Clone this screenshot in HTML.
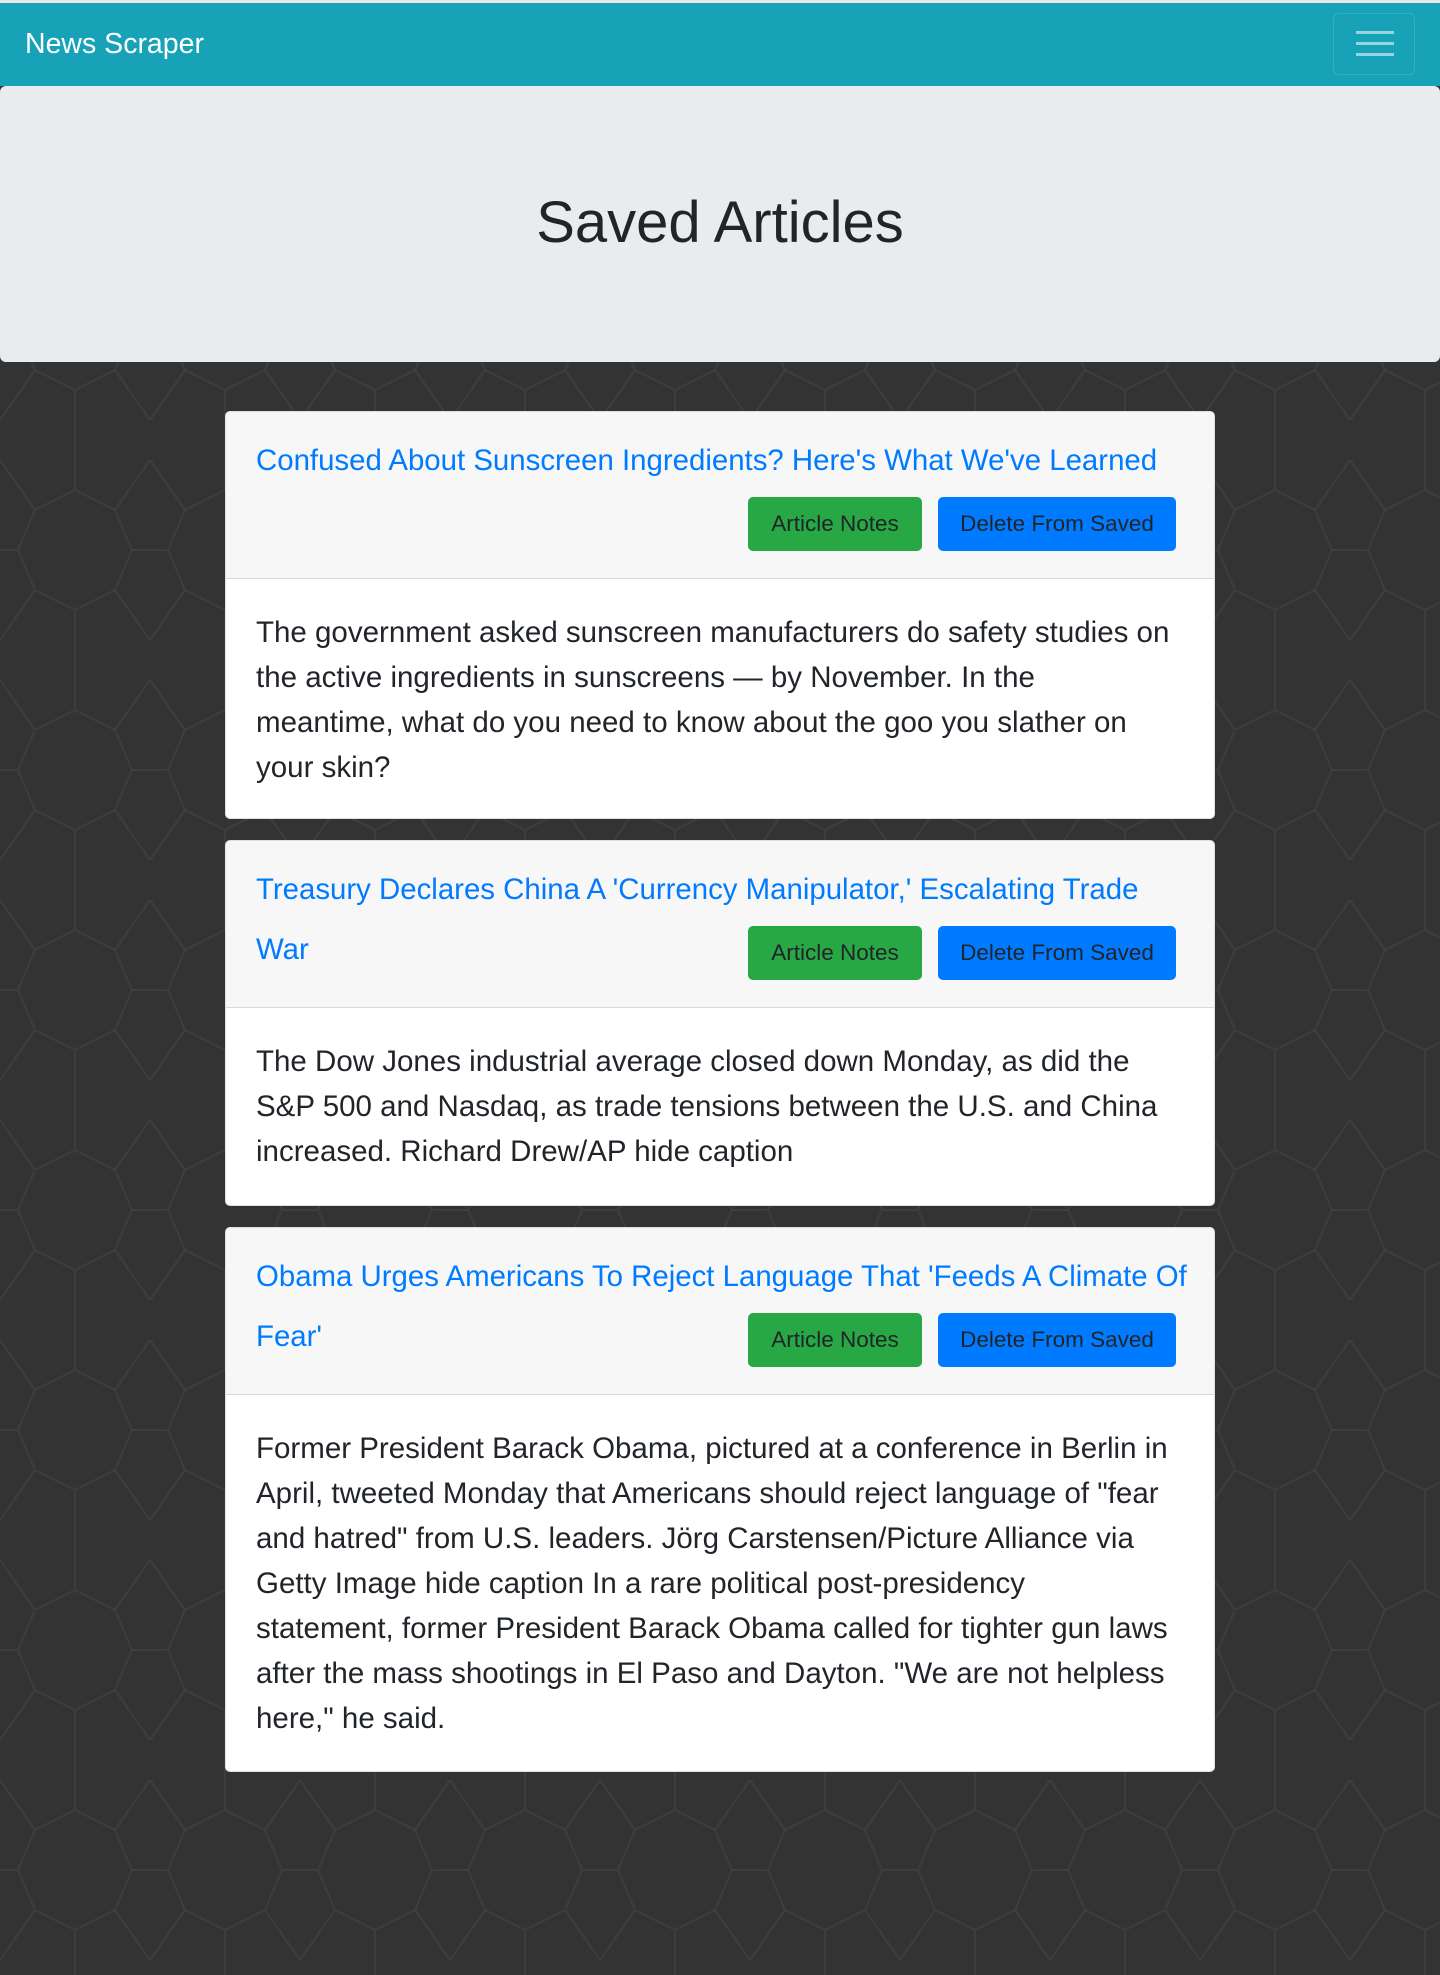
<!DOCTYPE html>
<html><head><meta charset="utf-8"><style>
*{box-sizing:border-box;margin:0;padding:0}
html,body{width:1440px;height:1975px;overflow:hidden}
body{background:#333;font-family:"Liberation Sans",sans-serif;position:relative}
#bg{position:absolute;left:0;top:0}
.nav{position:absolute;left:0;top:0;width:1440px;height:86px;background:#17a2b8;border-top:3px solid #e6e6e6}
.brand{position:absolute;left:25px;top:25px;color:#fff;font-size:28.5px}
.tog{position:absolute;left:1333px;top:10px;width:82px;height:62px;border:1px solid rgba(255,255,255,.12);border-radius:6px}
.tog i{position:absolute;left:22px;width:38px;height:3px;background:rgba(255,255,255,.55)}
.jumbo{position:absolute;left:0;top:86px;width:1440px;height:276px;background:#e9ecef;border-radius:6px}
.jumbo h1{position:absolute;left:0;width:1440px;top:102px;text-align:center;font-weight:300;font-size:58px;color:#212529;line-height:70px}
.card{position:absolute;left:225px;width:990px;background:#fff;border:1px solid rgba(0,0,0,.125);border-radius:5px;overflow:hidden}
.hd{background:#f7f7f7;border-bottom:1px solid rgba(0,0,0,.125);padding:19px 38px 27px 30px}
.ln{height:60px;line-height:60px;position:relative;white-space:nowrap}
.ln a{color:#007bff;font-size:29.4px;text-decoration:none}
.btns{position:absolute;right:0;top:6px;height:54px;display:flex;gap:16px}
.b{height:54px;line-height:54px;border-radius:5px;font-size:22.5px;color:#212529;text-align:center}
.g{background:#28a745;width:174px}
.bl{background:#007bff;width:238px}
.bd{padding:31px 30px 27px 30px;font-size:29.5px;line-height:45px;color:#212529;white-space:nowrap}
</style></head><body>
<svg id="bg" width="1440" height="1975">
<defs><pattern id="p" width="150" height="220" patternUnits="userSpaceOnUse">
<g fill="none" stroke="#3d3d3d" stroke-width="2">
<path d="M75 0 V50 L35 70 L18 110 L35 150 L75 170 V220"/>
<path d="M75 50 L115 70 L132 110 L115 150 L75 170"/>
<path d="M0 20 L35 70 M150 20 L115 70 M0 200 L35 150 M150 200 L115 150"/>
<path d="M18 110 H0 M132 110 H150"/>
</g></pattern></defs>
<rect width="1440" height="1975" fill="url(#p)"/>
</svg>
<div class="nav"><div class="brand">News Scraper</div><div class="tog"><i style="top:17px"></i><i style="top:28px"></i><i style="top:39px"></i></div></div>
<div class="jumbo"><h1>Saved Articles</h1></div>

<div class="card" style="top:411px;height:408px">
<div class="hd"><div class="ln"><a>Confused About Sunscreen Ingredients? Here's What We've Learned</a></div>
<div class="ln"><div class="btns"><div class="b g">Article Notes</div><div class="b bl">Delete From Saved</div></div></div></div>
<div class="bd">The government asked sunscreen manufacturers do safety studies on<br>the active ingredients in sunscreens — by November. In the<br>meantime, what do you need to know about the goo you slather on<br>your skin?</div>
</div>

<div class="card" style="top:840px;height:366px">
<div class="hd"><div class="ln"><a>Treasury Declares China A 'Currency Manipulator,' Escalating Trade</a></div>
<div class="ln"><a>War</a><div class="btns"><div class="b g">Article Notes</div><div class="b bl">Delete From Saved</div></div></div></div>
<div class="bd">The Dow Jones industrial average closed down Monday, as did the<br>S&amp;P 500 and Nasdaq, as trade tensions between the U.S. and China<br>increased. Richard Drew/AP hide caption</div>
</div>

<div class="card" style="top:1227px;height:545px">
<div class="hd"><div class="ln"><a>Obama Urges Americans To Reject Language That 'Feeds A Climate Of</a></div>
<div class="ln"><a>Fear'</a><div class="btns"><div class="b g">Article Notes</div><div class="b bl">Delete From Saved</div></div></div></div>
<div class="bd">Former President Barack Obama, pictured at a conference in Berlin in<br>April, tweeted Monday that Americans should reject language of "fear<br>and hatred" from U.S. leaders. Jörg Carstensen/Picture Alliance via<br>Getty Image hide caption In a rare political post-presidency<br>statement, former President Barack Obama called for tighter gun laws<br>after the mass shootings in El Paso and Dayton. "We are not helpless<br>here," he said.</div>
</div>
</body></html>
